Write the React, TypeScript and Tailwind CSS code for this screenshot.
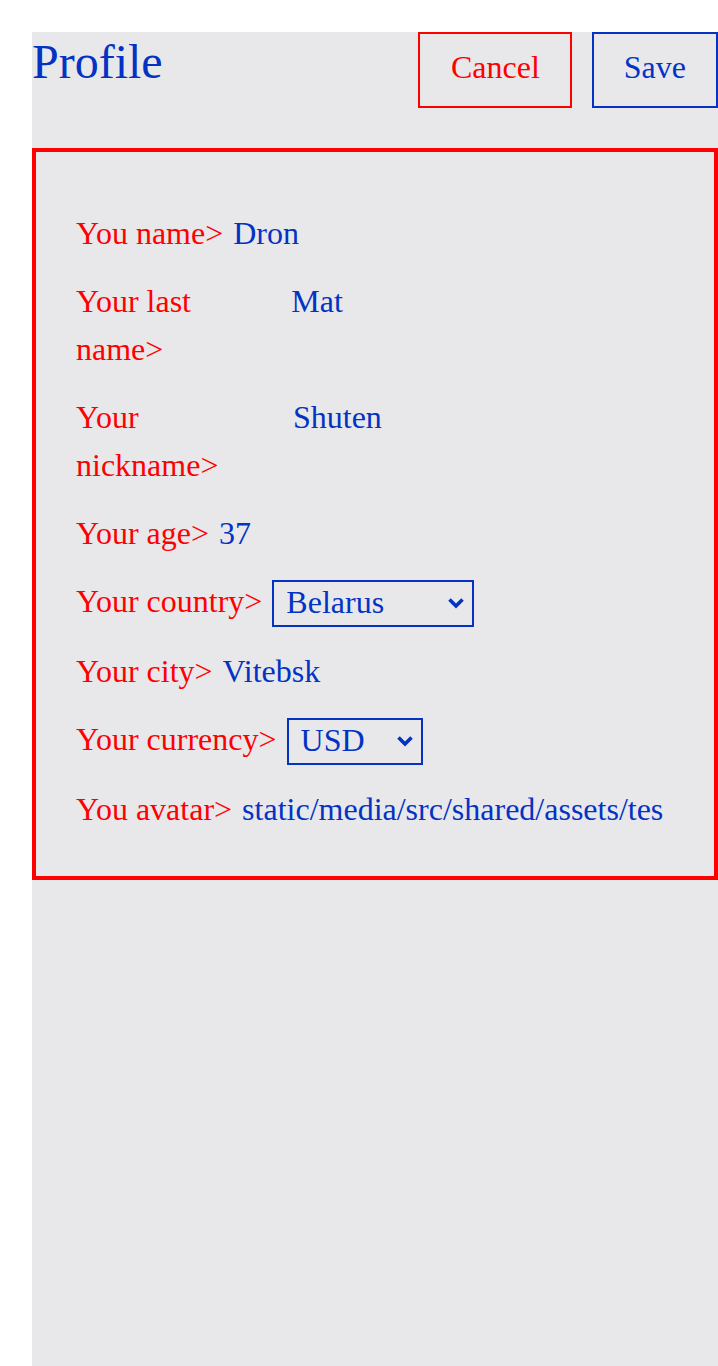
import React, { useState } from 'react'

const countries = ['Russia', 'Belarus', 'Ukraine', 'Kazakhstan', 'Armenia']
const currencies = ['RUB', 'EUR', 'USD']

// single profile row: red label on the left, blue value after it
const Row = ({ label, children, start }: { label: string; children: React.ReactNode; start?: boolean }) => (
  <div className={`flex gap-[10px] ${start ? 'items-start' : 'items-baseline'}`}>
    <span className="text-[#ff0000]">{label}</span>
    {children}
  </div>
)

const Field = ({ value }: { value: string }) => (
  <input
    className="w-[421px] min-w-0 text-[#0433c4] outline-none"
    value={value}
    readOnly
  />
)

const Chevron = () => (
  <svg
    className="pointer-events-none absolute right-[9px] top-[17px]"
    width="18"
    height="12"
    viewBox="0 0 18 12"
    fill="none"
  >
    <path d="M2.5 2.5 L9 9 L15.5 2.5" stroke="#0433c4" strokeWidth="3.6" />
  </svg>
)

const Select = ({
  value,
  options,
  onChange,
  width,
}: {
  value: string
  options: string[]
  onChange: (v: string) => void
  width: string
}) => (
  <div className={`relative mt-[3px] flex ${width}`}>
    <select
      className="block h-[47px] w-full appearance-none border-2 border-[#0433c4] pb-1 pl-[12px] leading-[36px] text-[#0433c4] outline-none"
      value={value}
      onChange={(e) => onChange(e.target.value)}
    >
      {options.map((o) => (
        <option key={o} value={o}>{o}</option>
      ))}
    </select>
    <Chevron />
  </div>
)

function App(): JSX.Element {
  const [country, setCountry] = useState('Belarus')
  const [currency, setCurrency] = useState('USD')

  return (
    <div
      className="min-h-[1366px] bg-white pl-8 pt-8 text-[32px] leading-[48px]"
      style={{ fontFamily: '"Liberation Serif", "Times New Roman", serif' }}
    >
      <div className="min-h-[1334px] bg-[#e8e8eb]">
        <div className="flex items-start justify-between">
          <h1 className="text-[48px] leading-[60px] text-[#0433c4]">Profile</h1>
          <div className="flex gap-5">
            <button className="border-2 border-[#ff0000] pb-[15px] pl-[31px] pr-[30px] pt-[9px] text-[#ff0000]">Cancel</button>
            <button className="border-2 border-[#0433c4] px-[30px] pb-[15px] pt-[9px] text-[#0433c4]">Save</button>
          </div>
        </div>

        <div className="mt-10 flex flex-col gap-5 border-4 border-[#ff0000] pb-[43px] pl-10 pr-3 pt-[57px]">
          <Row label="You name>">
            <Field value="Dron" />
          </Row>
          <Row label="Your last name>">
            <Field value="Mat" />
          </Row>
          <Row label="Your nickname>">
            <Field value="Shuten" />
          </Row>
          <Row label="Your age>">
            <Field value="37" />
          </Row>
          <Row label="Your country>" start>
            <Select value={country} options={countries} onChange={setCountry} width="w-[202px]" />
          </Row>
          <Row label="Your city>">
            <Field value="Vitebsk" />
          </Row>
          <Row label="Your currency>" start>
            <Select value={currency} options={currencies} onChange={setCurrency} width="w-[136px]" />
          </Row>
          <Row label="You avatar>">
            <Field value="static/media/src/shared/assets/tests/storybook.jpg" />
          </Row>
        </div>
      </div>
    </div>
  )
}

export default App
